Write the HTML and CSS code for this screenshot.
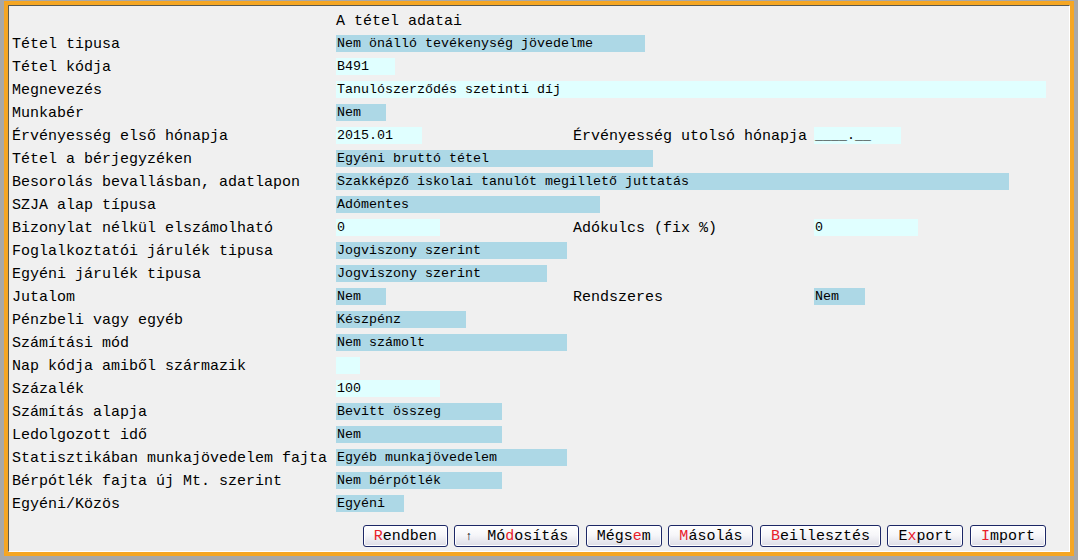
FILE: index.html
```html
<!DOCTYPE html>
<html lang="hu">
<head>
    <meta charset="UTF-8">
    <title>A tétel adatai</title>
    <link rel="stylesheet" href="styles.css">
</head>
<body>
    <div class="window">
        <div class="panel">
            <div class="row">
                <span></span>
                <span class="title">A tétel adatai</span>
            </div>
            <div class="row">
                <span class="label">Tétel tipusa</span>
                <div class="fld sel" style="width:309px">Nem önálló tevékenység jövedelme</div>
            </div>
            <div class="row">
                <span class="label">Tétel kódja</span>
                <div class="fld inp" style="width:59px">B491</div>
            </div>
            <div class="row">
                <span class="label">Megnevezés</span>
                <div class="fld inp" style="width:710px">Tanulószerződés szetinti díj</div>
            </div>
            <div class="row">
                <span class="label">Munkabér</span>
                <div class="fld sel" style="width:50px">Nem</div>
            </div>
            <div class="row">
                <span class="label">Érvényesség első hónapja</span>
                <div class="fld inp half" style="width:86px">2015.01</div>
                <span class="label">Érvényesség utolsó hónapja</span>
                <div class="fld inp half" style="width:87px">____.__</div>
            </div>
            <div class="row">
                <span class="label">Tétel a bérjegyzéken</span>
                <div class="fld sel" style="width:317px">Egyéni bruttó tétel</div>
            </div>
            <div class="row">
                <span class="label">Besorolás bevallásban, adatlapon</span>
                <div class="fld sel" style="width:673px">Szakképző iskolai tanulót megillető juttatás</div>
            </div>
            <div class="row">
                <span class="label">SZJA alap típusa</span>
                <div class="fld sel" style="width:264px">Adómentes</div>
            </div>
            <div class="row">
                <span class="label">Bizonylat nélkül elszámolható</span>
                <div class="fld inp half" style="width:104px">0</div>
                <span class="label">Adókulcs (fix %)</span>
                <div class="fld inp half" style="width:104px">0</div>
            </div>
            <div class="row">
                <span class="label">Foglalkoztatói járulék tipusa</span>
                <div class="fld sel" style="width:231px">Jogviszony szerint</div>
            </div>
            <div class="row">
                <span class="label">Egyéni járulék tipusa</span>
                <div class="fld sel" style="width:211px">Jogviszony szerint</div>
            </div>
            <div class="row">
                <span class="label">Jutalom</span>
                <div class="fld sel half" style="width:50px">Nem</div>
                <span class="label">Rendszeres</span>
                <div class="fld sel half" style="width:51px">Nem</div>
            </div>
            <div class="row">
                <span class="label">Pénzbeli vagy egyéb</span>
                <div class="fld sel" style="width:130px">Készpénz</div>
            </div>
            <div class="row">
                <span class="label">Számítási mód</span>
                <div class="fld sel" style="width:231px">Nem számolt</div>
            </div>
            <div class="row">
                <span class="label">Nap kódja amiből származik</span>
                <div class="fld inp" style="width:24px"></div>
            </div>
            <div class="row">
                <span class="label">Százalék</span>
                <div class="fld inp" style="width:104px">100</div>
            </div>
            <div class="row">
                <span class="label">Számítás alapja</span>
                <div class="fld sel" style="width:166px">Bevitt összeg</div>
            </div>
            <div class="row">
                <span class="label">Ledolgozott idő</span>
                <div class="fld sel" style="width:166px">Nem</div>
            </div>
            <div class="row">
                <span class="label">Statisztikában munkajövedelem fajta</span>
                <div class="fld sel" style="width:231px">Egyéb munkajövedelem</div>
            </div>
            <div class="row">
                <span class="label">Bérpótlék fajta új Mt. szerint</span>
                <div class="fld sel" style="width:166px">Nem bérpótlék</div>
            </div>
            <div class="row">
                <span class="label">Egyéni/Közös</span>
                <div class="fld sel" style="width:68px">Egyéni</div>
            </div>

            <div class="buttons">
                <button class="btn"><u>R</u>endben</button>
                <button class="btn"><span class="arrow">&#8593;</span>Mó<u>d</u>osítás</button>
                <button class="btn">Mégs<u>e</u>m</button>
                <button class="btn"><u>M</u>ásolás</button>
                <button class="btn"><u>B</u>eillesztés</button>
                <button class="btn">E<u>x</u>port</button>
                <button class="btn"><u>I</u>mport</button>
            </div>
        </div>
    </div>
</body>
</html>
```

FILE: styles.css
```css
body {
    margin: 0;
    padding: 0;
    background-color: #a8a8a8;
    font-family: "Liberation Mono", "Courier New", monospace;
    color: #000;
}
.window {
    box-sizing: border-box;
    width: 1070px;
    height: 555px;
    margin: 1px 0 0 4px;
    border: 4px solid #f5a623;
    background-color: #f0f0f0;
}
.panel {
    box-sizing: border-box;
    height: 100%;
    border-top: 1px solid #5a5a50;
    border-left: 1px solid #5a5a50;
    border-right: 1px solid #ffffff;
    border-bottom: 1px solid #ffffff;
    padding: 3px 0 0 3px;
}
.row {
    display: grid;
    grid-template-columns: 324px 237px 241px 1fr;
    align-items: center;
    height: 23px;
}
.label, .title {
    font-size: 15px;
    line-height: 17px;
    padding-top: 2px;
    white-space: pre;
}
.fld {
    grid-column: 2 / -1;
    justify-self: start;
    box-sizing: border-box;
    height: 17px;
    line-height: 17px;
    padding-left: 1px;
    font-size: 13.33px;
    white-space: pre;
    overflow: hidden;
}
.fld.half {
    grid-column: auto;
}
.sel {
    background-color: #add8e6;
}
.inp {
    background-color: #e0ffff;
}
.buttons {
    display: flex;
    justify-content: flex-end;
    gap: 6.5px;
    margin-top: 10px;
    padding-right: 23px;
}
.btn {
    box-sizing: border-box;
    height: 22px;
    padding: 0 10px;
    border: 1px solid #1c2766;
    border-radius: 3px;
    background: linear-gradient(to bottom, #ffffff 0%, #f6f6f9 45%, #dcdce6 100%);
    box-shadow: inset 0 0 0 1px #ffffff;
    font-family: "Liberation Mono", "Courier New", monospace;
    font-size: 15px;
    color: #000;
    cursor: pointer;
}
.btn u {
    text-decoration: none;
    color: #e8202a;
}
.arrow {
    display: inline-block;
    width: 22px;
    text-align: left;
    font-size: 12px;
}
```
